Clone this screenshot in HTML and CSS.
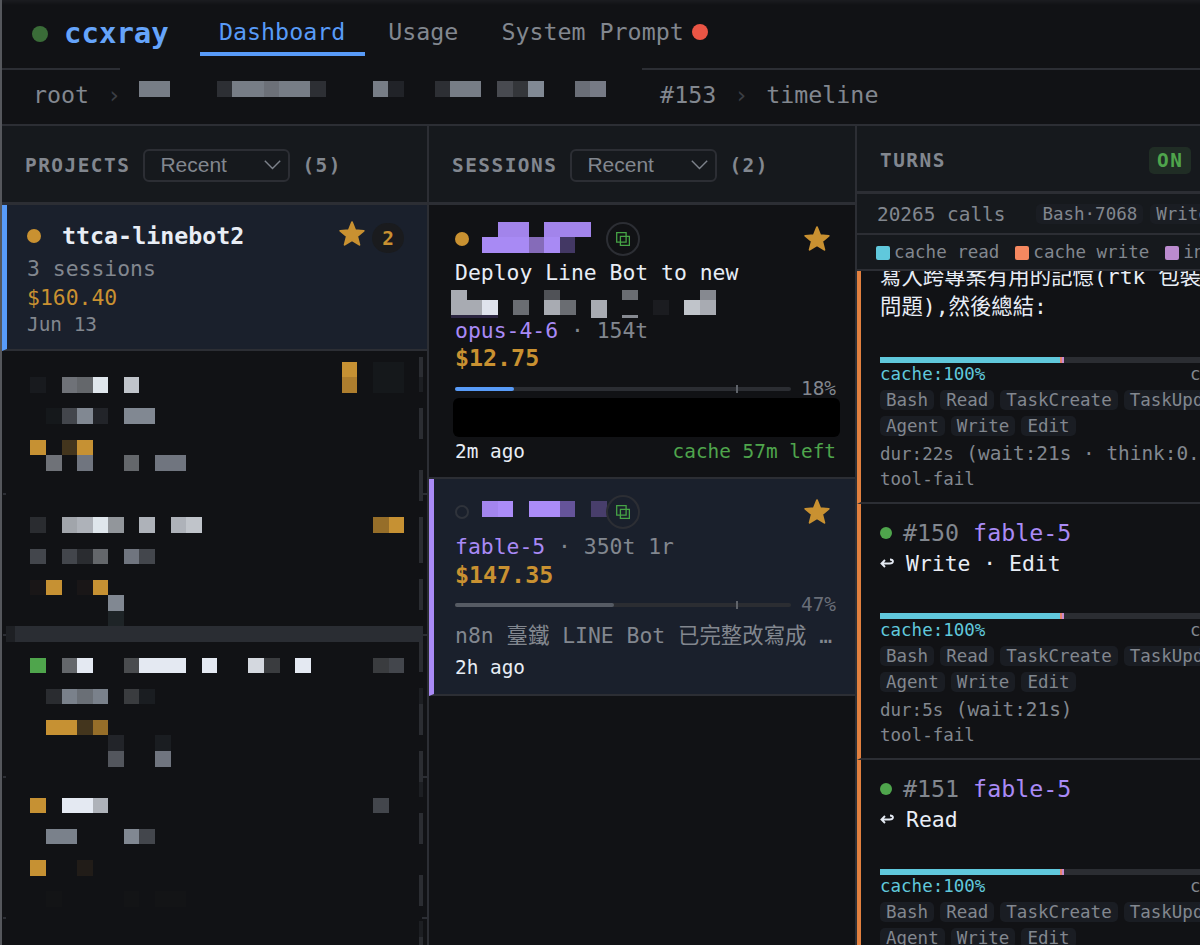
FILE: index.html
```html
<!DOCTYPE html>
<html lang="zh-Hant">
<head>
<meta charset="utf-8">
<title>ccxray</title>
<link rel="stylesheet" href="styles.css">
</head>
<body>
<svg class="defs" width="0" height="0">
  <symbol id="star" viewBox="0 0 26 26"><path d="M13 1.2 16.2 9.2 24.8 9.8 18.2 15.2 20.4 23.8 13 19.2 5.6 23.8 7.8 15.2 1.2 9.8 9.8 9.2Z" fill="#c99131" stroke="#c99131" stroke-width="1.8" stroke-linejoin="round"/></symbol>
  <symbol id="copy" viewBox="0 0 14 14"><path d="M.7.7h9.4v9.4H.7zM4.4 4.4h9v9h-9z" fill="none" stroke="#46a346" stroke-width="1.3"/></symbol>
</svg>
<div class="app">
  <header class="topbar">
    <span class="status"></span>
    <span class="brand">ccxray</span>
    <nav class="tabs">
      <a class="tab active">Dashboard</a>
      <a class="tab">Usage</a>
      <a class="tab">System Prompt<i class="alert"></i></a>
    </nav>
  </header>
  <div class="rules"><i class="rule-a"></i><i class="rule-b"></i></div>
  <div class="crumbs">
    <span>root</span><span class="sep">›</span>
    <svg class="crumb-mask" viewBox="0 0 467.1 15.57" width="467" height="15.6" shape-rendering="crispEdges"><g transform="scale(15.57)">
      <path fill="#777d86" d="M0 0h2v1H0zM15 0h1v1h-1z"/><path fill="#2d2f34" d="M5 0h1v1H5zM11 0h1v1h-1zM19 0h1v1h-1z"/>
      <path fill="#777d86" d="M6 0h5v1H6zM20 0h2v1h-2z"/><path fill="#6c7078" d="M8 0h1v1H8z"/><path fill="#212328" d="M16 0h1v1h-1z"/>
      <path fill="#484a50" d="M23 0h1v1h-1z"/><path fill="#34363a" d="M24 0h1v1h-1z"/><path fill="#818994" d="M25 0h1v1h-1z"/>
      <path fill="#6a6e77" d="M28 0h1v1h-1z"/><path fill="#767a85" d="M29 0h1v1h-1z"/>
    </g></svg>
    <span>#153</span><span class="sep">›</span><span>timeline</span>
  </div>
  <main class="columns">
    <section class="col projects">
      <div class="col-head"><h2>PROJECTS</h2><div class="select">Recent<svg width="17" height="10" viewBox="0 0 17 10"><path d="m.8.8 7.7 7.8L16.2.8" fill="none" stroke="#7d828b" stroke-width="1.4"/></svg></div><span class="count">(5)</span></div>
      <article class="project selected">
        <div class="project-head"><i class="dot"></i><b>ttca-linebot2</b><svg class="star" width="26" height="26"><use href="#star"/></svg><span class="badge">2</span></div>
        <div class="sessions-count">3 sessions</div>
        <div class="project-cost">$160.40</div>
        <div class="date">Jun 13</div>
      </article>
      <svg class="mask-list" width="426" height="594" viewBox="2 351 426 594" shape-rendering="crispEdges">
        <path d="M3 494h3M422 494h6M3 635h3M422 635h6M3 777h3M422 777h6M3 918h3M422 918h6" stroke="#2c2e34" stroke-width="1.5"/>
        <path d="M421 357v20M421 408v31M421 470v31M421 517v46M421 579v31M421 642v30M421 704v31M421 751v31M421 813v31M421 875v31M421 937v8" stroke="#2b2d32" stroke-width="3.4"/>
        <path d="M421 377v15M421 688v16M421 782v15M421 921v16" stroke="#1d1f23" stroke-width="3.4"/>
        <path fill="#2a2d33" d="M15 626h408v16H15z"/><path fill="#1e2024" d="M6 626h9v16H6z"/>
        <g transform="translate(30.4 377.3) scale(15.57)">
          <path fill="#181a1e" d="M0 0h1v1H0z"/><path fill="#15181b" d="M22-1h2v2h-2zM1 2h1v1H1z"/>
          <path fill="#c69133" d="M20-1h1v1h-1zM0 4h1v1H0zM3 4h1v1H3zM1 13h1v1H1zM4 13h1v1H4zM23 9h1v1h-1zM1 22h2v1H1zM0 27h1v1H0zM0 31h1v1H0z"/>
          <path fill="#ae7e2e" d="M20 0h1v1h-1z"/><path fill="#966e29" d="M22 9h1v1h-1zM4 22h1v1H4z"/><path fill="#43351d" d="M2 4h1v1H2zM3 22h1v1H3z"/>
          <path fill="#6f7278" d="M2 0h1v1H2zM1 5h1v1H1z"/><path fill="#64676b" d="M3 0h1v1H3zM2 18h1v1H2zM6 5h1v1H6zM4 11h1v1H4z"/>
          <path fill="#dfe6ec" d="M4 0h1v1H4zM4 9h1v1H4z"/><path fill="#c0c4ca" d="M6 0h1v1H6zM10 9h1v1h-1z"/>
          <path fill="#43464c" d="M2 2h1v1H2zM0 11h1v1H0zM2 11h1v1H2zM7 11h1v1H7zM22 27h1v1h-1zM23 18h1v1h-1zM7 29h1v1H7z"/>
          <path fill="#818892" d="M3 2h1v1H3zM6 2h2v1H6zM5 14h1v1H5zM6 29h1v1H6z"/><path fill="#222429" d="M4 2h1v1H4zM5 23h1v1H5z"/>
          <path fill="#70757f" d="M3 5h1v1H3zM8 5h2v1H8zM6 11h1v1H6zM8 24h1v1H8z"/>
          <path fill="#2a2c30" d="M0 9h1v1H0zM3 11h1v1H3zM1 20h1v1H1z"/><path fill="#a1a5ab" d="M2 9h1v1H2z"/><path fill="#aeb2b9" d="M3 9h1v1H3zM7 9h1v1H7zM9 9h1v1H9zM4 27h1v1H4z"/><path fill="#92969b" d="M5 9h1v1H5z"/>
          <path fill="#1e2427" d="M5 15h1v1H5z"/><path fill="#191617" d="M0 13h1v1H0zM3 13h1v1H3z"/>
          <path fill="#4fa54c" d="M0 18h1v1H0z"/><path fill="#e4e9f2" d="M3 18h1v1H3zM7 18h3v1H7zM11 18h1v1h-1zM17 18h1v1h-1zM2 27h2v1H2z"/><path fill="#d4d8df" d="M14 18h1v1h-1z"/>
          <path fill="#4a4c4f" d="M6 18h1v1H6z"/><path fill="#3a3c3f" d="M15 18h1v1h-1zM22 18h1v1h-1zM6 20h1v1H6z"/>
          <path fill="#7a818b" d="M2 20h1v1H2zM4 20h1v1H4zM1 29h2v1H1z"/><path fill="#6a6f76" d="M3 20h1v1H3z"/><path fill="#1a1d21" d="M7 20h1v1H7zM8 23h1v1H8z"/>
          <path fill="#53565d" d="M5 24h1v1H5z"/><path fill="#211c18" d="M3 31h1v1H3z"/><path fill="#131416" d="M1 33h1v1H1zM6 33h1v1H6zM8 33h2v1H8z"/>
        </g>
      </svg>
    </section>

    <section class="col sessions">
      <div class="col-head"><h2>SESSIONS</h2><div class="select">Recent<svg width="17" height="10" viewBox="0 0 17 10"><path d="m.8.8 7.7 7.8L16.2.8" fill="none" stroke="#7d828b" stroke-width="1.4"/></svg></div><span class="count">(2)</span></div>
      <article class="session">
        <div class="session-head"><i class="dot"></i>
          <svg class="name-mask" width="125" height="39" viewBox="0 0 125 39" shape-rendering="crispEdges"><g transform="translate(0 2.7) scale(15.57)"><path fill="#a88af4" d="M0 1h3v1H0zM4 1h1v1H4z"/><path fill="#a284eb" d="M1 0h2v1H1zM4 0h3v1H4z"/><path fill="#856bb9" d="M3 1h1v1H3z"/><path fill="#433864" d="M5 1h1v1H5z"/></g></svg>
          <span class="copy"><svg width="14" height="14"><use href="#copy"/></svg></span><svg class="star" width="26" height="26"><use href="#star"/></svg></div>
        <div class="session-title">Deploy Line Bot to new</div>
        <svg class="title-mask" width="266" height="30" viewBox="0 0 266 30" shape-rendering="crispEdges">
          <path fill="#a8abb2" d="M0 2h16v10h15v15H0zM93 12h16v15H93zM140 12h16v18h-16zM249 12h16v15h-16z"/><path fill="#505257" d="M93 2h16v10H93z"/><path fill="#6a6d72" d="M171 2h16v10h-16zM62 12h16v15H62zM109 12h16v15h-16z"/><path fill="#868990" d="M249 2h16v10h-16zM171 27h16v3h-16z"/><path fill="#dfe3ed" d="M31 12h16v15H31z"/><path fill="#c0c4ca" d="M233 12h16v15h-16z"/><path fill="#1b1c20" d="M202 12h16v15h-16z"/><path fill="#2b2540" d="M0 27h47v3H0z"/>
        </svg>
        <div class="meta"><em>opus-4-6</em> · 154t</div>
        <div class="cost">$12.75</div>
        <div class="context"><div class="track"><i class="fill" style="width:17.5%"></i><i class="tick"></i></div><span>18%</span></div>
        <div class="blackout"></div>
        <div class="foot"><span>2m ago</span><span class="left">cache 57m left</span></div>
      </article>
      <article class="session selected">
        <div class="session-head"><i class="dot idle"></i>
          <svg class="name-mask" width="125" height="39" viewBox="0 0 125 39" shape-rendering="crispEdges"><g transform="translate(0 9.2) scale(15.57)"><path fill="#a385ee" d="M0 0h1v1H0z"/><path fill="#ab8cf8" d="M1 0h1v1H1zM3 0h2v1H3z"/><path fill="#65549a" d="M5 0h1v1H5z"/><path fill="#483e6b" d="M7 0h1v1H7z"/></g></svg>
          <span class="copy"><svg width="14" height="14"><use href="#copy"/></svg></span><svg class="star" width="26" height="26"><use href="#star"/></svg></div>
        <div class="meta"><em>fable-5</em> · 350t 1r</div>
        <div class="cost">$147.35</div>
        <div class="context"><div class="track"><i class="fill" style="width:47.3%"></i><i class="tick"></i></div><span>47%</span></div>
        <div class="summary">n8n 臺鐵 LINE Bot 已完整改寫成 …</div>
        <div class="foot"><span>2h ago</span></div>
      </article>
    </section>

    <section class="col turns">
      <div class="turns-head"><h2>TURNS</h2><span class="on">ON</span></div>
      <div class="stats"><span class="calls">20265 calls</span><span class="tag">Bash·7068</span><span class="tag">Write</span></div>
      <div class="legend"><span><i class="read"></i>cache read</span><span><i class="write"></i>cache write</span><span><i class="input"></i>in</span></div>
      <div class="turn-list">
        <article class="turn first">
          <div class="message">寫入跨專案有用的記憶(rtk 包裝<br>問題),然後總結:</div>
          <div class="usage"><i></i></div>
          <div class="cache"><span>cache:100%</span><span class="ctx">c</span></div>
          <div class="tags"><span class="tag">Bash</span><span class="tag">Read</span><span class="tag">TaskCreate</span><span class="tag">TaskUpdate</span></div>
          <div class="tags"><span class="tag">Agent</span><span class="tag">Write</span><span class="tag">Edit</span></div>
          <div class="dur">dur:22s <span>(wait:21s · think:0.</span></div>
          <div class="fail">tool-fail</div>
        </article>
        <article class="turn">
          <div class="turn-head"><i></i>#150 <em>fable-5</em></div>
          <div class="action"><svg width="14" height="10" viewBox="0 0 14 10"><path d="M5 2 1.5 5.5 5 9M2 5.5h7.5c4.5 0 4.5-4 .5-4" fill="none" stroke="#e4e9f2" stroke-width="1.9"/></svg>Write · Edit</div>
          <div class="usage"><i></i></div>
          <div class="cache"><span>cache:100%</span><span class="ctx">c</span></div>
          <div class="tags"><span class="tag">Bash</span><span class="tag">Read</span><span class="tag">TaskCreate</span><span class="tag">TaskUpdate</span></div>
          <div class="tags"><span class="tag">Agent</span><span class="tag">Write</span><span class="tag">Edit</span></div>
          <div class="dur">dur:5s <span>(wait:21s)</span></div>
          <div class="fail">tool-fail</div>
        </article>
        <article class="turn">
          <div class="turn-head"><i></i>#151 <em>fable-5</em></div>
          <div class="action"><svg width="14" height="10" viewBox="0 0 14 10"><path d="M5 2 1.5 5.5 5 9M2 5.5h7.5c4.5 0 4.5-4 .5-4" fill="none" stroke="#e4e9f2" stroke-width="1.9"/></svg>Read</div>
          <div class="usage"><i></i></div>
          <div class="cache"><span>cache:100%</span><span class="ctx">c</span></div>
          <div class="tags"><span class="tag">Bash</span><span class="tag">Read</span><span class="tag">TaskCreate</span><span class="tag">TaskUpdate</span></div>
          <div class="tags"><span class="tag">Agent</span><span class="tag">Write</span><span class="tag">Edit</span></div>
        </article>
      </div>
    </section>
  </main>
</div>
</body>
</html>
```
FILE: styles.css
```css
:root {
  --bg: #111215;
  --panel: #16191d;
  --line: #2c2e34;
  --muted: #82878f;
  --text: #e8edf5;
  --blue: #589bf8;
  --gold: #c99131;
  --purple: #a98af6;
  --green: #4fa54c;
  --selected: #1a202c;
}
* { box-sizing: border-box; }
body {
  margin: 0;
  width: 1200px;
  height: 945px;
  overflow: hidden;
  background: var(--bg);
  color: var(--muted);
  font-family: "DejaVu Sans Mono", "Noto Sans CJK TC", monospace;
  font-size: 23.3px;
  white-space: nowrap;
}
em { font-style: normal; color: var(--purple); }
i { display: block; flex: none; }
svg { display: block; flex: none; }
h2 { margin: 0; font-size: 19.4px; letter-spacing: 1.5px; font-weight: 700; }
.defs { position: absolute; }
.app { height: 945px; display: flex; flex-direction: column; border-left: 2px solid #55575c; }

.topbar { height: 68px; flex: none; display: flex; align-items: flex-start; padding-left: 30px; background: linear-gradient(#1b1c20, var(--bg) 5px); }
.status { width: 16px; height: 16px; border-radius: 50%; background: #3a6c38; margin-top: 26px; }
.brand { margin-left: 16px; width: 136px; color: #65a4fb; font-weight: 700; font-size: 29px; line-height: 67px; }
.tabs { display: flex; }
.tab { display: flex; align-items: center; height: 56px; padding: 11px 20px 0 19px; border-bottom: 4px solid transparent; line-height: 41px; margin-right: 4px; }
.tab.active { color: var(--blue); border-color: var(--blue); }
.alert { width: 16px; height: 16px; border-radius: 50%; background: #ea5545; margin-left: 8px; }
.rules { display: flex; justify-content: space-between; height: 2px; flex: none; }
.rule-a { width: 118px; background: var(--line); }
.rule-b { width: 558px; background: var(--line); }
.crumbs { height: 56px; flex: none; display: flex; align-items: flex-start; padding-left: 31px; line-height: 50px; border-bottom: 2px solid var(--line); }
.sep { width: 50px; padding-left: 18px; color: #3b3e44; }
.crumb-mask { margin: 11px 54px 0 0; }

.columns { flex: 1; min-height: 0; display: grid; grid-template-columns: 427px 428px 343px; }
.col { min-width: 0; overflow: hidden; border-right: 2px solid var(--line); }
.turns { border-right: 0; display: flex; flex-direction: column; }
.col-head { height: 79px; display: flex; align-items: center; padding: 2px 0 0 23px; background: var(--panel); border-bottom: 3px solid var(--line); }
.select { width: 147px; height: 33px; margin: 0 12px 0 13px; padding: 0 7px 0 15px; display: flex; align-items: center; justify-content: space-between; border: 2px solid var(--line); border-radius: 6px; font: 21px "Liberation Sans", sans-serif; }
.count { font-size: 19.4px; font-weight: 700; letter-spacing: 1.5px; }

.project { height: 146px; padding: 14px 23px 0 20px; border-left: 5px solid var(--blue); border-bottom: 2px solid var(--line); background: var(--selected); }
.project-head { display: flex; align-items: center; height: 33px; color: var(--text); }
.dot { width: 14px; height: 14px; border-radius: 50%; background: var(--gold); }
.project-head b { margin-left: 21px; line-height: 32px; }
.project-head .star { margin: -3px 0 0 auto; }
.badge { width: 32px; height: 30px; margin: 4px 0 0 7px; border-radius: 15px; background: #1a1b1e; color: var(--gold); font-size: 19.4px; font-weight: 700; line-height: 31px; text-align: center; }
.sessions-count { font-size: 21.4px; line-height: 33px; }
.project-cost { font-size: 21.4px; line-height: 26px; color: var(--gold); }
.date { font-size: 19.4px; line-height: 27px; }

.session { height: 274px; padding: 14px 19px 0 26px; border-bottom: 2px solid var(--line); font-size: 21.4px; }
.session-head { display: flex; align-items: center; height: 39px; }
.name-mask { margin-left: 13px; }
.copy { width: 34px; height: 34px; border: 2px solid var(--line); border-radius: 50%; display: flex; align-items: center; justify-content: center; margin-left: -1px; }
.session-head .star { margin: 1px 6px 0 auto; }
.session-title { line-height: 30px; color: var(--text); }
.title-mask { margin-left: -4px; }
.meta { line-height: 25px; }
.cost { font-size: 23.3px; line-height: 29px; font-weight: 700; color: var(--gold); }
.context { display: flex; align-items: center; justify-content: space-between; height: 19px; margin-top: 7px; font-size: 19.4px; line-height: 19px; }
.track { position: relative; width: 336px; height: 4px; border-radius: 2px; background: #2b2d32; }
.fill { height: 4px; border-radius: 2px; background: var(--blue); }
.tick { position: absolute; left: 281px; top: -2px; width: 2px; height: 8px; background: #5f636a; }
.blackout { height: 39px; margin: 0 -4px 0 -2px; border-radius: 6px; background: #000; }
.foot { display: flex; justify-content: space-between; font-size: 19.4px; line-height: 29px; color: var(--text); }
.foot .left { color: var(--green); }
.session.selected { height: 217px; padding: 13px 19px 0 21px; border-left: 5px solid var(--purple); background: var(--selected); }
.idle { background: none; border: 2px solid #2f333b; }
.selected .meta { line-height: 31px; height: 30px; }
.selected .cost { line-height: 27px; }
.selected .context { margin-top: 7px; color: #696e78; }
.selected .fill { background: #565b64; }
.summary { margin-top: 6px; line-height: 32px; height: 32px; }
.selected .foot { line-height: 31px; }

.turns-head { height: 68px; flex: none; display: flex; align-items: center; justify-content: space-between; padding: 3px 9px 0 23px; background: var(--panel); border-bottom: 3px solid var(--line); }
.on { width: 42px; height: 27px; border-radius: 5px; background: #202d25; color: var(--green); font-size: 19.4px; font-weight: 700; letter-spacing: 1.5px; line-height: 27px; padding-left: 8px; }
.stats { height: 41px; flex: none; display: flex; align-items: center; gap: 7px; padding: 1px 0 0 20px; background: var(--panel); border-bottom: 2px solid var(--line); font-size: 19.4px; }
.calls { margin-right: 24px; }
.tag { flex: none; height: 20px; padding: 0 6px; border-radius: 5px; background: #1a1d23; font-size: 17.5px; line-height: 20px; }
.legend { height: 36px; flex: none; display: flex; align-items: center; gap: 16px; padding-left: 19px; background: var(--panel); border-bottom: 2px solid var(--line); font-size: 17.5px; }
.legend span { display: flex; align-items: center; gap: 4px; flex: none; height: 35px; line-height: 33px; }
.legend i { width: 14px; height: 14px; border-radius: 2px; margin-top: 1px; }
.read { background: #60c8dc; }
.write { background: #f58860; }
.input { background: #bb8bcf; }
.turn-list { flex: 1; min-height: 0; overflow: hidden; }
.turn { height: 256px; padding: 13px 0 0 19px; border-left: 4px solid #e2803f; border-bottom: 2px solid var(--line); }
.turn.first { height: 233px; padding-top: 0; }
.message { height: 86px; display: flex; align-items: flex-end; padding-bottom: 35px; font-size: 21.4px; line-height: 30px; color: var(--text); }
.turn-head { display: flex; align-items: center; height: 30px; }
.turn-head i { width: 12px; height: 12px; margin: 2px 11px 0 0; border-radius: 50%; background: var(--green); }
.turn-head em { margin-left: 14px; }
.action { display: flex; align-items: center; gap: 12px; height: 32px; margin-bottom: 34px; font-size: 21.4px; color: var(--text); }
.usage { height: 6px; background: #2b2d32; }
.usage i { width: 184px; height: 6px; background: linear-gradient(90deg, #60c8dc 180px, #e88470 180px 182px, #c78ad0 182px); }
.cache { position: relative; height: 21px; line-height: 22px; font-size: 17.5px; color: #60c8dc; }
.ctx { position: absolute; left: 310px; color: var(--muted); }
.tags { display: flex; gap: 6px; height: 26px; padding-top: 6px; }
.dur { height: 31px; padding-top: 4px; line-height: 28px; font-size: 17.5px; }
.dur span { font-size: 19.4px; margin-left: 2px; }
.fail { font-size: 17.5px; line-height: 24px; }
```
